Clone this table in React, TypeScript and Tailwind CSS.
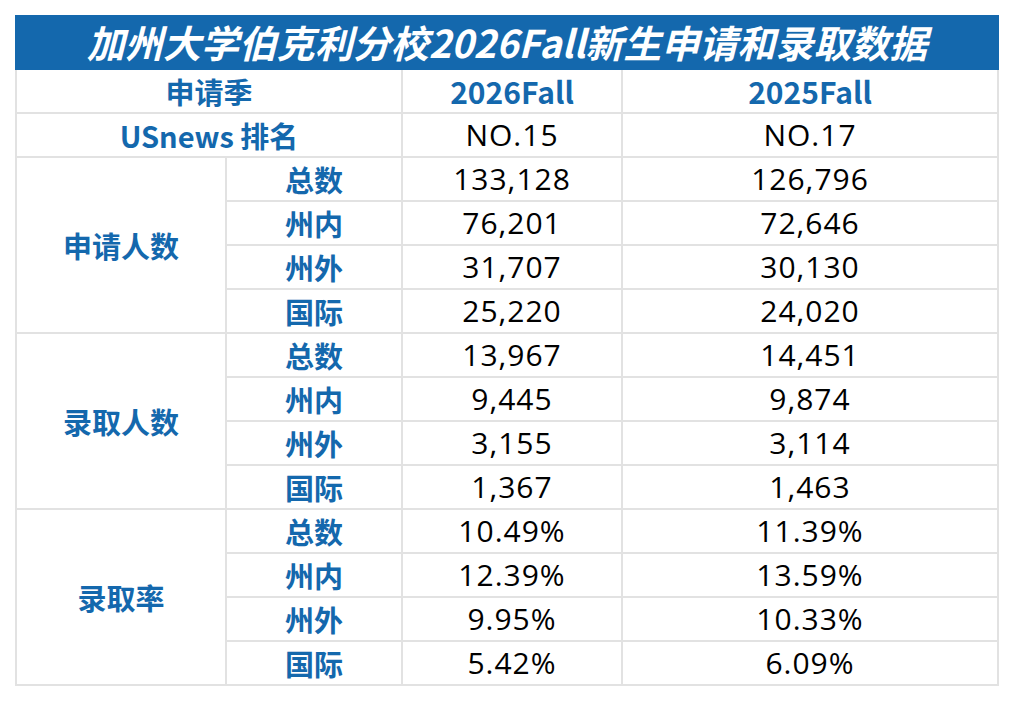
import type { ReactNode } from "react";

type Group = {
  label: string;
  rows: { sub: string; y2026: string; y2025: string }[];
};

const groups: Group[] = [
  {
    label: "申请人数",
    rows: [
      { sub: "总数", y2026: "133,128", y2025: "126,796" },
      { sub: "州内", y2026: "76,201", y2025: "72,646" },
      { sub: "州外", y2026: "31,707", y2025: "30,130" },
      { sub: "国际", y2026: "25,220", y2025: "24,020" },
    ],
  },
  {
    label: "录取人数",
    rows: [
      { sub: "总数", y2026: "13,967", y2025: "14,451" },
      { sub: "州内", y2026: "9,445", y2025: "9,874" },
      { sub: "州外", y2026: "3,155", y2025: "3,114" },
      { sub: "国际", y2026: "1,367", y2025: "1,463" },
    ],
  },
  {
    label: "录取率",
    rows: [
      { sub: "总数", y2026: "10.49%", y2025: "11.39%" },
      { sub: "州内", y2026: "12.39%", y2025: "13.59%" },
      { sub: "州外", y2026: "9.95%", y2025: "10.33%" },
      { sub: "国际", y2026: "5.42%", y2025: "6.09%" },
    ],
  },
];

const cjk = "font-['Noto_Sans_CJK_SC','Noto_Sans',sans-serif]";
const num = "font-['Open_Sans','Noto_Sans_CJK_SC',sans-serif]";

function Label({ children, className = "" }: { children: ReactNode; className?: string }) {
  return (
    <div
      className={`flex items-center justify-center bg-white text-[29px] font-bold leading-none text-[#1468ad] ${cjk} ${className}`}
    >
      {children}
    </div>
  );
}

function Value({ children }: { children: ReactNode }) {
  return (
    <div
      className={`flex items-center justify-center bg-white text-[30px] leading-none tracking-[1px] text-black ${num}`}
    >
      {children}
    </div>
  );
}

export default function App() {
  return (
    <div className="min-h-[702px] w-[1014px] bg-white pl-[15px] pt-[15px]">
      <div className="w-[984px]">
        <div
          className={`flex h-[55px] items-center justify-center bg-[#1468ad] pb-[2px] text-[38px] font-bold italic leading-none text-white ${cjk}`}
        >
          加州大学伯克利分校2026Fall新生申请和录取数据
        </div>
        <div className="grid auto-rows-[42px] grid-cols-[208px_174px_218px_374px] gap-[2px] bg-[#e2e2e2] px-[2px] pb-[2px]">
          <Label className="col-span-2">申请季</Label>
          <Label className="text-[30px]">2026Fall</Label>
          <Label className="text-[30px]">2025Fall</Label>

          <Label className="col-span-2">USnews 排名</Label>
          <Value>NO.15</Value>
          <Value>NO.17</Value>

          {groups.map((g) =>
            g.rows.map((r, i) => (
              <>
                {i === 0 ? (
                  <Label key={`${g.label}-head`} className="row-span-4">
                    {g.label}
                  </Label>
                ) : null}
                <Label key={`${g.label}-${r.sub}`}>{r.sub}</Label>
                <Value key={`${g.label}-${r.sub}-26`}>{r.y2026}</Value>
                <Value key={`${g.label}-${r.sub}-25`}>{r.y2025}</Value>
              </>
            ))
          )}
        </div>
      </div>
    </div>
  );
}
